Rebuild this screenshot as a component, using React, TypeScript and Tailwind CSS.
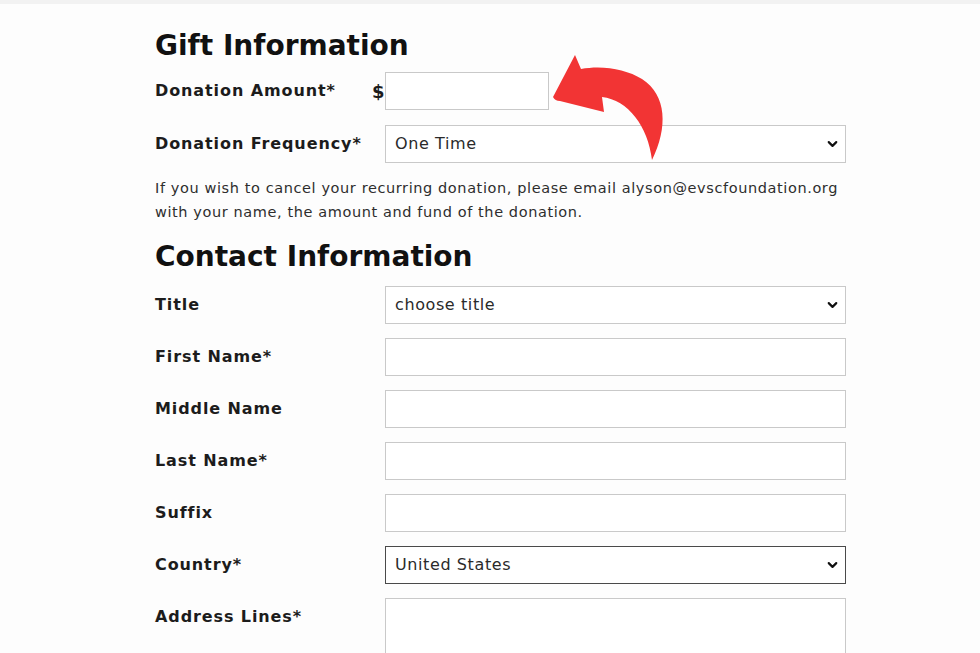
import { ChevronDown } from "lucide-react";

const contactRows = [
    { label: "First Name*" },
    { label: "Middle Name" },
    { label: "Last Name*" },
    { label: "Suffix" },
];

function Label({ children }: { children: React.ReactNode }) {
    return (
        <label className="w-[230px] shrink-0 text-[16px] leading-[20px] font-bold tracking-[0.9px] text-[#1c1c1c]">
            {children}
        </label>
    );
}

function TextInput({ className = "" }: { className?: string }) {
    return (
        <input
            type="text"
            className={`h-[38px] border border-[#c9c9c9] bg-white px-[9px] text-[16px] outline-none ${className}`}
        />
    );
}

function Select({ value, options, dark = false }: { value: string; options: string[]; dark?: boolean }) {
    return (
        <div className="relative flex-1">
            <select
                defaultValue={value}
                className={`h-[38px] w-full appearance-none bg-white pl-[9px] pr-8 text-[16px] tracking-[0.6px] text-[#2a2a2a] outline-none ${
                    dark ? "border border-[#4a4a4a]" : "border border-[#c9c9c9]"
                }`}
            >
                {options.map((o) => (
                    <option key={o}>{o}</option>
                ))}
            </select>
            <ChevronDown
                className="pointer-events-none absolute right-[6px] top-1/2 h-[15px] w-[15px] -translate-y-1/2 text-[#111]"
                strokeWidth={3.5}
            />
        </div>
    );
}

// Curved red pointer next to the amount field
function Arrow() {
    return (
        <svg className="pointer-events-none absolute left-0 top-0" width="980" height="200" viewBox="0 0 980 200">
            <path
                d="M575 55 L553 97 Q555 101 560 101 L604 112 L602 97 C628 100 648 126 652 160 C668 128 667 95 642 79 C626 69 602 65 581 69 Z"
                fill="#f23434"
            />
        </svg>
    );
}

export default function App() {
    return (
        <div
            className="relative h-[653px] w-[980px] overflow-hidden bg-[#fdfdfd]"
            style={{ fontFamily: '"DejaVu Sans", Verdana, sans-serif' }}
        >
            <div className="h-[4px] bg-[#f2f2f2]" />
            <div className="ml-[155px] w-[691px]">
                {/* Gift */}
                <h2 className="mt-[25px] text-[28px] leading-[34px] font-bold text-[#111]">Gift Information</h2>

                <div className="mt-[9px] flex items-center">
                    <Label>Donation Amount*</Label>
                    <span className="-ml-[13px] w-[13px] text-[18px] font-bold text-[#1c1c1c]">$</span>
                    <TextInput className="w-[164px]" />
                </div>

                <div className="mt-[15px] flex items-center">
                    <Label>Donation Frequency*</Label>
                    <Select value="One Time" options={["One Time", "Monthly", "Quarterly", "Annually"]} />
                </div>

                <p className="mt-[13px] text-[14.5px] leading-[24px] tracking-[0.6px] text-[#2e2e2e]">
                    If you wish to cancel your recurring donation, please email alyson@evscfoundation.org
                    <br />
                    with your name, the amount and fund of the donation.
                </p>

                {/* Contact */}
                <h2 className="mt-[16px] text-[28px] leading-[34px] font-bold text-[#111]">Contact Information</h2>

                <div className="mt-[12px] flex flex-col gap-[14px]">
                    <div className="flex items-center">
                        <Label>Title</Label>
                        <Select value="choose title" options={["choose title", "Mr.", "Mrs.", "Ms.", "Dr."]} />
                    </div>
                    {contactRows.map((r) => (
                        <div key={r.label} className="flex items-center">
                            <Label>{r.label}</Label>
                            <TextInput className="flex-1" />
                        </div>
                    ))}
                    <div className="flex items-center">
                        <Label>Country*</Label>
                        <Select value="United States" options={["United States", "Canada", "Mexico"]} dark />
                    </div>
                    <div className="flex items-start">
                        <label className="mt-[9px] w-[230px] shrink-0 text-[16px] leading-[20px] font-bold tracking-[0.9px] text-[#1c1c1c]">
                            Address Lines*
                        </label>
                        <textarea className="h-[90px] flex-1 resize-none border border-[#c9c9c9] bg-white outline-none" />
                    </div>
                </div>
            </div>
            <Arrow />
        </div>
    );
}
